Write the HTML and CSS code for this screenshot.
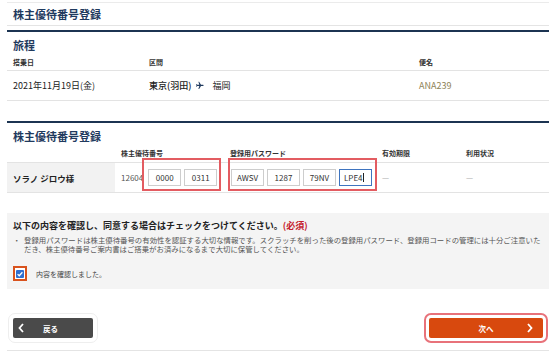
FILE: index.html
```html
<!doctype html>
<html lang="ja">

<head>
    <meta charset="utf-8">
    <title>株主優待番号登録</title>
    <link rel="stylesheet" href="styles.css">
</head>

<body>
    <div class="page">
        <div class="page-head">
            <h1 class="page-title">株主優待番号登録</h1>
        </div>

        <!-- 旅程 -->
        <div class="section">
            <h2 class="section-title">旅程</h2>
            <div class="trip trip-head">
                <div>搭乗日</div>
                <div>区間</div>
                <div>便名</div>
            </div>
            <div class="trip trip-row">
                <div>2021年11月19日(金)</div>
                <div class="route">
                    <span class="dep">東京(羽田)</span>
                    <svg class="plane" viewBox="0 0 24 24"><path d="M16 21h2l5-8h5.5c.83 0 1.5-.67 1.5-1.5S29.33 10 28.5 10H23l-5-8h-2l2.5 8H13l-1.5-2H10l1 3.5-1 3.5h1.5L13 13h5.5z" transform="translate(-7 0)"/></svg>
                    <span>福岡</span>
                </div>
                <div class="flight">ANA239</div>
            </div>
        </div>

        <!-- 株主優待番号登録 -->
        <div class="section">
            <h2 class="section-title">株主優待番号登録</h2>
            <div class="reg reg-head">
                <div></div>
                <div>株主優待番号</div>
                <div>登録用パスワード</div>
                <div>有効期限</div>
                <div>利用状況</div>
            </div>
            <div class="reg reg-row">
                <div class="name">ソラノ ジロウ様</div>
                <div class="number">
                    <span class="prefix">12604</span>
                    <span class="fields mark mark-num">
                        <span class="field">0000</span>
                        <span class="field">0311</span>
                    </span>
                </div>
                <div class="pass">
                    <span class="fields mark mark-pass">
                        <span class="field">AWSV</span>
                        <span class="field">1287</span>
                        <span class="field">79NV</span>
                        <span class="field focus">LPE4<i class="caret"></i></span>
                    </span>
                </div>
                <div class="none">—</div>
                <div class="none">—</div>
            </div>
        </div>

        <!-- 同意 -->
        <div class="notice">
            <p class="notice-title">以下の内容を確認し、同意する場合はチェックをつけてください。<span class="req">(必須)</span></p>
            <ul class="notice-list">
                <li>登録用パスワードは株主優待番号の有効性を認証する大切な情報です。スクラッチを削った後の登録用パスワード、登録用コードの管理には十分ご注意いただき、株主優待番号ご案内書はご搭乗がお済みになるまで大切に保管してください。</li>
            </ul>
            <label class="agree">
                <span class="check"><span class="box"><svg viewBox="0 0 10 10"><path d="M2 5.2l2 2 4-4.4" /></svg></span></span>
                <span>内容を確認しました。</span>
            </label>
        </div>

        <div class="actions">
            <a class="btn btn-back" href="#">
                <svg class="chev" viewBox="0 0 6 10"><path d="M5 1L1.5 5 5 9" /></svg>
                <span>戻る</span>
            </a>
            <a class="btn btn-next" href="#">
                <span></span>
                <span>次へ</span>
                <svg class="chev" viewBox="0 0 6 10"><path d="M1 1l3.5 4L1 9" /></svg>
            </a>
        </div>
    </div>
</body>

</html>
```

FILE: styles.css
```css
* {
    margin: 0;
    padding: 0;
    box-sizing: border-box;
}

ol,
ul,
li {
    list-style: none;
}

body {
    font-family: "Noto Sans CJK JP", "Noto Sans", sans-serif;
    color: #222;
    background: #fff;
}

.page {
    width: 542px;
    margin: 0 7px;
}

.page-head {
    margin-top: 2px;
    border-top: 1px solid #ebebeb;
    border-bottom: 1px solid #e4e4e4;
}

.page-title {
    font-size: 11px;
    line-height: 22px;
    font-weight: 700;
    color: #1f3a5e;
    padding-left: 6px;
}

.section {
    margin-top: 4px;
    border-top: 2px solid #1c3452;
}

.section + .section {
    margin-top: 20px;
}

.section-title {
    font-size: 11px;
    line-height: 16px;
    font-weight: 700;
    color: #1f3a5e;
    padding: 5px 0 0 6px;
}

/* 旅程 */
.trip {
    display: grid;
    grid-template-columns: 136px 270px 1fr;
    padding-left: 6px;
    border-bottom: 1px solid #e3e3e3;
}

.trip-head {
    font-size: 7px;
    line-height: 10px;
    font-weight: 700;
    color: #333;
    padding-top: 4px;
    padding-bottom: 3px;
}

.trip-row {
    font-size: 9px;
    line-height: 29px;
    color: #222;
}

.route {
    display: flex;
    align-items: center;
}

.dep {
    font-weight: 500;
}

.plane {
    width: 9px;
    height: 9px;
    margin: 0 8px 0 4px;
    fill: #1f3a5e;
}

.flight {
    color: #8e8256;
}

/* 株主優待番号 */
.reg {
    display: grid;
    grid-template-columns: 108px 109px 152px 84px 1fr;
    border-bottom: 1px solid #e3e3e3;
}

.reg > div {
    padding-left: 6px;
}

.reg-head {
    font-size: 7px;
    line-height: 10px;
    font-weight: 700;
    color: #333;
    padding: 4px 0;
}

.reg-row {
    height: 30px;
    font-size: 8px;
    color: #333;
}

.reg-row > div {
    display: flex;
    align-items: center;
}

.reg-row .name {
    background: #f2f2f2;
    font-size: 8.5px;
    font-weight: 700;
    color: #222;
}

.prefix {
    color: #555;
}

.fields {
    display: inline-flex;
    gap: 3px;
}

.number .fields {
    margin-left: 5px;
}

.pass .fields {
    margin-left: 1px;
}

.field {
    width: 33px;
    height: 17px;
    border: 1px solid #cdcdcd;
    background: #fff;
    font-size: 8px;
    line-height: 15px;
    text-align: center;
    color: #333;
}

.field.focus {
    border-color: #3e74bf;
    text-align: left;
    padding-left: 4px;
}

.caret {
    display: inline-block;
    width: 1px;
    height: 9px;
    background: #222;
    vertical-align: -1px;
}

/* 赤枠 */
.mark {
    position: relative;
}

.mark::before {
    content: "";
    position: absolute;
    border: 2px solid #e35c61;
}

.mark-num::before {
    top: -11px;
    bottom: -5px;
    left: -6px;
    right: -4px;
}

.mark-pass::before {
    top: -11px;
    bottom: -5px;
    left: -3px;
    right: -5px;
}

.none {
    color: #aaa;
}

/* 同意 */
.notice {
    margin-top: 20px;
    background: #f4f4f4;
    padding: 7px 6px 8px;
}

.notice-title {
    font-size: 9px;
    line-height: 12px;
    font-weight: 700;
    color: #222;
}

.req {
    color: #c4202c;
}

.notice-list {
    margin-top: 3px;
    font-size: 7.4px;
    line-height: 9px;
    color: #555;
}

.notice-list li {
    padding-left: 11px;
    text-indent: -11px;
}

.notice-list li::before {
    content: "・";
    display: inline-block;
    width: 11px;
    text-indent: 0;
}

.agree {
    display: flex;
    align-items: center;
    gap: 9px;
    margin-top: 13px;
    font-size: 7px;
    color: #444;
}

.check {
    width: 14px;
    height: 15px;
    border: 2px solid #d9531e;
    background: #fff;
    display: grid;
    place-items: center;
}

.check .box {
    width: 8px;
    height: 8px;
    background: #2f6fd1;
    border-radius: 1px;
    display: grid;
    place-items: center;
}

.check svg {
    width: 8px;
    height: 8px;
    fill: none;
    stroke: #fff;
    stroke-width: 1.6;
}

/* ボタン */
.actions {
    display: flex;
    justify-content: space-between;
    margin-top: 29px;
    padding: 0 6px 12px 6px;
    border-bottom: 1px solid #e4e4e4;
}

.btn {
    height: 20px;
    border-radius: 2px;
    color: #fff;
    text-decoration: none;
    font-size: 7.5px;
    font-weight: 700;
}

.btn .chev {
    width: 6px;
    height: 10px;
    fill: none;
    stroke: #fff;
    stroke-width: 1.8;
}

.btn-back {
    width: 80px;
    display: flex;
    align-items: center;
    padding-left: 5px;
    gap: 19px;
    background: #4a4a4a;
    outline: 1px solid #eeeeee;
    outline-offset: 4px;
}

.btn-next {
    width: 114px;
    display: grid;
    grid-template-columns: 1fr auto 1fr;
    align-items: center;
    background: #d8490e;
    outline: 2px solid #e8727a;
    outline-offset: 3px;
}

.btn-next .chev {
    justify-self: end;
    margin-right: 10px;
}
```
